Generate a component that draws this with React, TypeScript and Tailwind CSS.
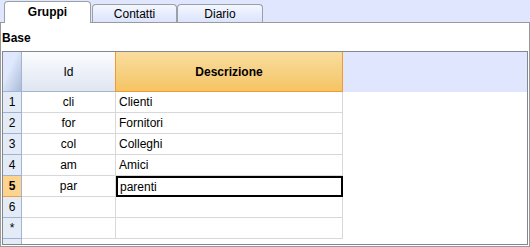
import React from "react";

type Row = { n: string; id: string; desc: string };

const rows: Row[] = [
  { n: "1", id: "cli", desc: "Clienti" },
  { n: "2", id: "for", desc: "Fornitori" },
  { n: "3", id: "col", desc: "Colleghi" },
  { n: "4", id: "am", desc: "Amici" },
  { n: "5", id: "par", desc: "parenti" },
  { n: "6", id: "", desc: "" },
  { n: "*", id: "", desc: "" },
];

const activeRow = 4;

function Tab({ label, active, w }: { label: string; active?: boolean; w: string }) {
  if (active) {
    return (
      <div className={`relative z-10 -mb-px flex h-[22px] ${w} items-center justify-center rounded-t-[4px] border border-b-0 border-[#9aa0a6] bg-white pb-[1px] text-[12px] font-bold`}>
        {label}
      </div>
    );
  }
  return (
    <div className={`flex h-[18px] ${w} items-center justify-center rounded-t-[4px] border border-b-0 border-[#9aa0a6] bg-gradient-to-b from-[#f4f7ff] to-[#dbe4fc] pt-[1px] text-[12px]`}>
      {label}
    </div>
  );
}

export default function App() {
  return (
    <div
      className="flex h-[247px] w-[530px] flex-col bg-[#dfe6fe] text-black"
      style={{ fontFamily: '"Liberation Sans", Arial, sans-serif' }}
    >
      <div className="flex h-[22px] items-end pl-[4px]">
        <Tab label="Gruppi" active w="w-[87px]" />
        <div className="w-[1px]" />
        <Tab label="Contatti" w="w-[85px]" />
        <Tab label="Diario" w="w-[86px]" />
      </div>

      <div className="flex flex-1 flex-col border border-[#9a9a9a] bg-white">
        <div className="flex h-[28px] items-center pl-[1px] pt-[2px] text-[12px] font-bold">Base</div>

        <div className="mx-[1px] mb-[1px] flex flex-1 flex-col border border-[#828790]">
          {/* header */}
          <div className="flex h-[40px]">
            <div className="w-[19px] border-r border-b border-[#9fb5d2] bg-gradient-to-br from-[#dfe8fd] from-40% to-[#aabcd6]" />
            <div className="flex w-[93px] items-center justify-center border-b border-[#a3b6cf] bg-gradient-to-b from-[#fbfcff] to-[#dfe5f1] text-[12px]">
              Id
            </div>
            <div className="flex w-[228px] items-center justify-center border-x border-b border-[#f29a2e] bg-gradient-to-b from-[#f9dd9e] to-[#f5c463] text-[12px] font-bold">
              Descrizione
            </div>
            <div className="flex-1 bg-[#dfe6fe]" />
          </div>

          {/* body */}
          {rows.map((r, i) => {
            const active = i === activeRow;
            return (
              <div key={r.n} className="flex h-[21px] text-[12px]">
                <div
                  className={
                    active
                      ? "flex w-[19px] items-center justify-center border-r border-b border-r-[#9fb5d2] border-b-[#f0a040] bg-[#fcd48e] font-bold"
                      : "flex w-[19px] items-center justify-center border-r border-b border-r-[#9fb5d2] border-b-[#9cb3d3] bg-[#e3ebf6]"
                  }
                >
                  {r.n}
                </div>
                <div className="flex w-[94px] items-center justify-center border-r border-b border-[#d8d8d8]">
                  {r.id}
                </div>
                {active ? (
                  <div className="flex w-[227px] items-center border-2 border-black pl-[2px]">{r.desc}</div>
                ) : (
                  <div className="flex w-[227px] items-center border-r border-b border-[#d8d8d8] pl-[3px]">
                    {r.desc}
                  </div>
                )}
                <div className="flex-1" />
              </div>
            );
          })}

          <div className="flex flex-1">
            <div className="w-[19px] border-r border-[#9fb5d2] bg-[#e3ebf6]" />
            <div className="flex-1" />
          </div>
        </div>
      </div>
    </div>
  );
}
